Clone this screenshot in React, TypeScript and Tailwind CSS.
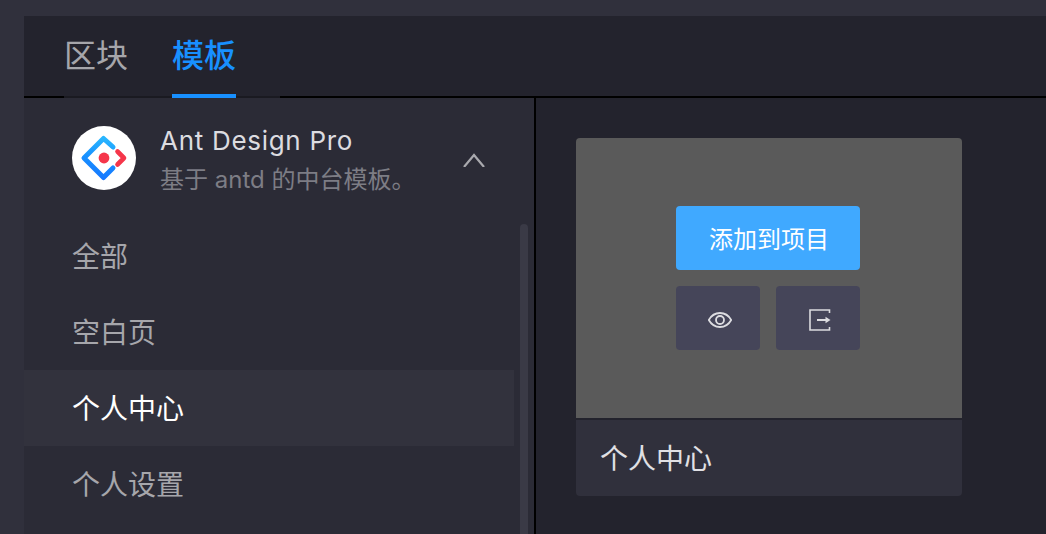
const font = { fontFamily: '"Inter", "Noto Sans CJK SC", sans-serif' };

const categories = ["全部", "空白页", "个人中心", "个人设置"];

function AntLogo() {
  return (
    <svg width="64" height="64" viewBox="0 0 64 64" fill="none">
      <defs>
        <linearGradient id="antBlue" x1="31" y1="12" x2="25" y2="53" gradientUnits="userSpaceOnUse">
          <stop offset="0" stopColor="#29b6ff" />
          <stop offset="0.5" stopColor="#1890ff" />
          <stop offset="1" stopColor="#1677ff" />
        </linearGradient>
      </defs>
      <path
        d="M41 21 L31.5 12.5 L12 32 L31.5 51.5 L41 42"
        stroke="url(#antBlue)"
        strokeWidth="5"
        strokeLinecap="round"
        strokeLinejoin="round"
      />
      <circle cx="32" cy="32" r="5.4" fill="#f5364a" />
      <path
        d="M45.5 25.5 L52 32 L45.5 38.5"
        stroke="#f5364a"
        strokeWidth="4.6"
        strokeLinecap="round"
        strokeLinejoin="round"
      />
    </svg>
  );
}

function EyeIcon() {
  return (
    <svg width="24" height="24" viewBox="0 0 24 24" fill="none" stroke="#dcdce0" strokeWidth="1.8">
      <path d="M0.8 12 C3.5 7.2 7.4 5 12 5 C16.6 5 20.5 7.2 23.2 12 C20.5 16.8 16.6 19 12 19 C7.4 19 3.5 16.8 0.8 12 Z" />
      <circle cx="12" cy="12" r="4" />
    </svg>
  );
}

function ExportIcon() {
  return (
    <svg width="22" height="22" viewBox="0 0 22 22" fill="none" stroke="#dcdce0" strokeWidth="1.6">
      <path d="M20.5 4 V1 H1 V21 H20.5 V18" />
      <path d="M8 11 H18" strokeWidth="2" />
      <path d="M16.5 7.8 L21.5 11 L16.5 14.2 Z" fill="#dcdce0" stroke="none" />
    </svg>
  );
}

export default function App() {
  return (
    <div className="flex h-[534px] w-[1046px] flex-col overflow-hidden bg-[#23232d]" style={font}>
      <div className="h-4 shrink-0 bg-[#30303c]" />
      <div className="flex min-h-0 flex-1">
        <div className="w-6 shrink-0 bg-[#30303c]" />
        <div className="flex min-w-0 flex-1 flex-col">
          {/* tabs */}
          <div className="flex h-20 shrink-0 items-center gap-[44px] pl-10 text-[32px] leading-[40px]">
            <div className="relative text-[#a6a6ab]">区块</div>
            <div className="relative font-medium text-[#1890ff]">
              模板
              <div className="absolute -bottom-[22px] left-0 right-0 h-1 bg-[#1890ff]" />
            </div>
          </div>
          <div className="flex h-[2px] shrink-0">
            <div className="w-10 bg-black" />
            <div className="w-[216px] bg-[#1a1a21]" />
            <div className="flex-1 bg-black" />
          </div>

          <div className="flex min-h-0 flex-1">
            {/* left panel */}
            <div className="relative w-[510px] shrink-0 overflow-hidden bg-[#2b2b36]">
              <div className="flex h-[120px] items-start pl-12 pr-[49px] pt-7">
                <div className="flex h-16 w-16 shrink-0 items-center justify-center rounded-full bg-white">
                  <AntLogo />
                </div>
                <div className="-mt-px ml-6 flex-1">
                  <div className="text-[26px] leading-[32px] tracking-[0.7px] text-[#dcdce0]">Ant Design Pro</div>
                  <div className="mt-[7px] text-[24px] leading-[32px] text-[#7d7d85]">基于 antd 的中台模板。</div>
                </div>
                <svg width="22" height="14" viewBox="0 0 22 14" fill="none" stroke="#a9a9ae" strokeWidth="2.2" className="mt-[27px]">
                  <path d="M1 14 L11 2 L21 14" />
                </svg>
              </div>
              <div className="pr-5">
                {categories.map((name) => (
                  <div
                    key={name}
                    className={`flex h-[76px] items-center pl-12 pt-[2px] text-[28px] ${
                      name === "个人中心" ? "bg-[#32323d] text-white" : "text-[#a6a6ab]"
                    }`}
                  >
                    {name}
                  </div>
                ))}
              </div>
              <div className="absolute bottom-0 right-[6px] top-[126px] w-2 rounded-t bg-[#3a3a46]" />
            </div>
            <div className="w-[2px] shrink-0 bg-black" />

            {/* right panel */}
            <div className="flex-1 pl-10 pt-10">
              <div className="w-[386px] overflow-hidden rounded">
                <div className="flex h-[280px] flex-col items-center justify-center gap-4 bg-[#5a5a5a] pr-[2px]">
                  <div className="flex h-16 w-[184px] items-center justify-center rounded bg-[#40a9ff] pl-[2px] pt-1 text-[24px] text-white">
                    添加到项目
                  </div>
                  <div className="flex gap-4">
                    <div className="flex h-16 w-[84px] items-center justify-center rounded bg-[#454559] pl-1 pt-1">
                      <EyeIcon />
                    </div>
                    <div className="flex h-16 w-[84px] items-center justify-center rounded bg-[#454559] pl-[3px] pt-1">
                      <ExportIcon />
                    </div>
                  </div>
                </div>
                <div className="mt-[2px] flex h-[76px] items-center bg-[#30303c] pl-6 pt-[2px] text-[28px] text-[#e0e0e4]">
                  个人中心
                </div>
              </div>
            </div>
          </div>
        </div>
      </div>
    </div>
  );
}
